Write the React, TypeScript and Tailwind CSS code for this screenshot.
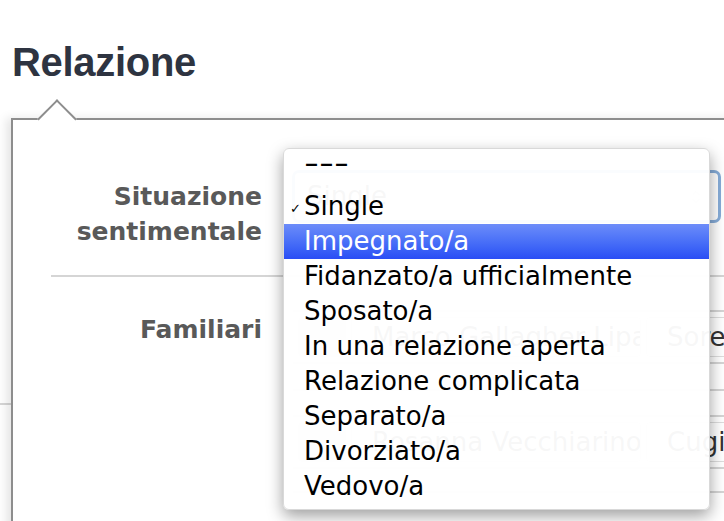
import { ChevronDown, ChevronUp } from 'lucide-react';

const OPTIONS = [
  'Single',
  'Impegnato/a',
  'Fidanzato/a ufficialmente',
  'Sposato/a',
  'In una relazione aperta',
  'Relazione complicata',
  'Separato/a',
  'Divorziato/a',
  'Vedovo/a',
];

const FAMILY = [
  { name: 'Marco Gallagher Lipari', rel: 'Sorella' },
  { name: 'Rosanna Vecchiarino', rel: 'Cugina' },
];

const ui = { fontFamily: '"DejaVu Sans", "Open Sans", sans-serif' };

export default function App() {
  const selected = 'Single';
  const hovered = 'Impegnato/a';

  return (
    <div className="relative w-[724px] h-[521px] overflow-hidden bg-white" style={ui}>
      {/* page rule peeking out behind the panel */}
      <div className="absolute left-0 top-[403px] w-[11px] h-[2px] bg-[#d6d6d6]" />

      <h1
        className="pt-[42px] px-3 text-[40px] leading-[40px] font-bold text-[#2e3441] tracking-[-0.3px]"
        style={{ fontFamily: '"Liberation Sans", Arial, sans-serif' }}
      >
        Relazione
      </h1>

      {/* Popover panel */}
      <div className="relative mt-[36px] ml-[11px] w-[760px] h-[420px] bg-white border-l-2 border-t-2 border-[#8d8d8d] shadow-[-5px_0_9px_rgba(0,0,0,0.10)]">
        <div className="absolute left-[30px] -top-[15px] w-7 h-7 rotate-45 bg-white border-l-2 border-t-2 border-[#8d8d8d]" />

        {/* Situazione sentimentale */}
        <div className="ml-[38px] border-b-2 border-[#d5d5d5] flex pt-[50px] pb-[26px]">
          <div className="w-[211px] mt-[9px] text-right text-[25px] leading-[35px] font-bold text-[#595959]">
            Situazione
            <br />
            sentimentale
          </div>
          <div className="ml-[30px] w-[429px] h-[53px] rounded-[7px] border-[3px] border-[#86acd8] bg-white flex items-center justify-between px-3 text-[26px] text-[#333]">
            <span>Single</span>
            <span className="flex flex-col text-[#aaa] -space-y-1 mr-1">
              <ChevronUp size={12} strokeWidth={2} />
              <ChevronDown size={12} strokeWidth={2} />
            </span>
          </div>
        </div>

        {/* Familiari */}
        <div className="ml-[38px] flex">
          <div className="w-[211px] mt-[35px] text-right text-[25px] leading-[35px] font-bold text-[#595959]">
            Familiari
          </div>
          <div className="ml-[31px] flex-1 pt-[33px]">
            {FAMILY.map((f, i) => (
              <div key={f.name}>
                <div className="h-[54px] border-t-2 border-b-2 border-[#d5d5d5] flex items-center gap-[5px] pl-[5px] text-[26px] text-[#333]">
                  <div className="w-[48px] h-[40px] rounded bg-[#e6e6e6]" />
                  <div className="w-[290px] h-[40px] border border-[#ddd] rounded px-5 flex items-center overflow-hidden whitespace-nowrap">
                    {f.name}
                  </div>
                  <div className="h-[40px] border border-[#ddd] rounded pl-[20px] flex items-center whitespace-nowrap">
                    {f.rel}
                  </div>
                </div>
                {i === 0 && (
                  <>
                    <div className="h-[27px] border-b-2 border-[#d5d5d5]" />
                    <div className="h-[24px]" />
                  </>
                )}
                {i === 1 && <div className="h-[24px] border-b-2 border-[#d5d5d5]" />}
              </div>
            ))}
          </div>
        </div>
      </div>

      {/* Open select menu */}
      <div className="absolute left-[283px] top-[148px] w-[427px] py-[5px] rounded-[6px] bg-white/[0.96] border border-[#d9d9d9] shadow-[0_6px_16px_rgba(0,0,0,0.38)] text-[26px] leading-[35px] text-black">
        <div className="h-[35px] pl-[20px]">
          <span className="inline-block origin-left scale-x-[1.6] -translate-y-[8px]">---</span>
        </div>
        {OPTIONS.map((o) => (
          <div
            key={o}
            className={`relative h-[35px] pl-[20px] whitespace-nowrap ${
              o === hovered ? 'bg-gradient-to-b from-[#6c8cf9] to-[#2a4df5] text-white' : ''
            }`}
          >
            {o === selected && (
              <span className="absolute left-[6px] top-0 text-[13px] leading-[40px]">✓</span>
            )}
            {o}
          </div>
        ))}
      </div>
    </div>
  );
}
